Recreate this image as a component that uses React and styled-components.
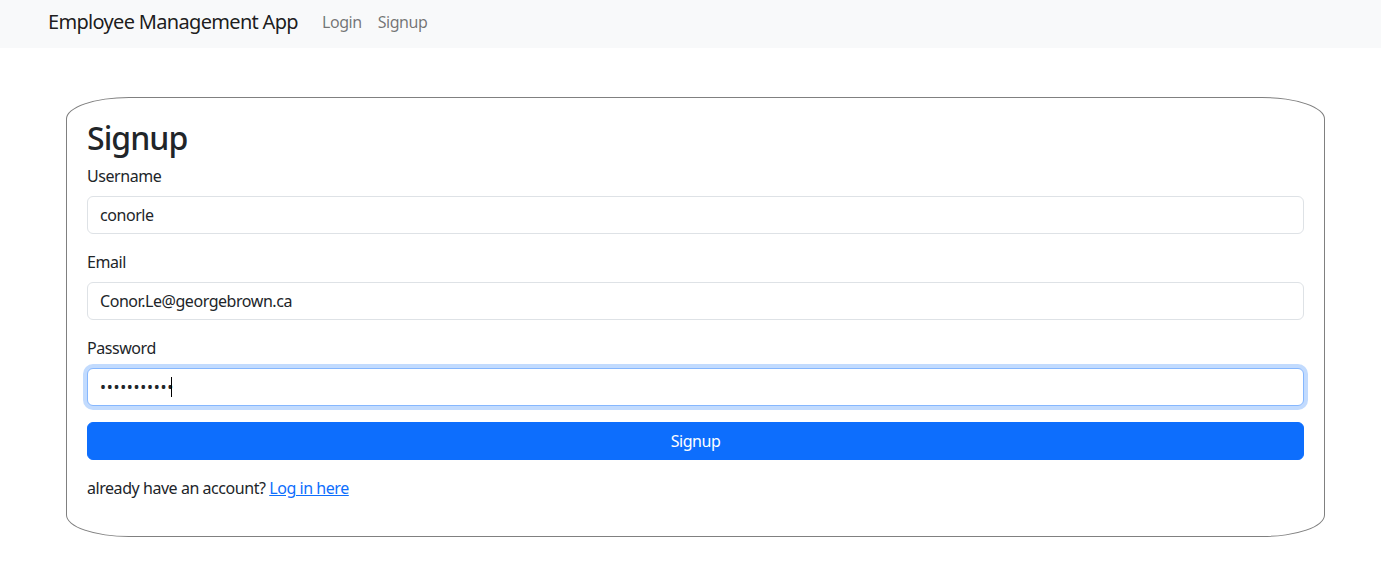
import React, { useState } from "react";
import styled, { createGlobalStyle } from "styled-components";

const FONT = `"Segoe UI", "Noto Sans", "Liberation Sans", sans-serif`;

const Global = createGlobalStyle`
  *, *::before, *::after { box-sizing: border-box; }
  body {
    margin: 0;
    font-family: ${FONT};
    font-size: 16px;
    line-height: 1.5;
    letter-spacing: -0.028em;
    color: #212529;
    background: #fff;
  }
`;

const Navbar = styled.nav`
  height: 48px;
  background: #f8f9fa;
  display: flex;
  align-items: center;
  padding: 0 0 4px 48px;
`;

const Brand = styled.a`
  font-size: 20px;
  line-height: 30px;
  letter-spacing: -0.034em;
  color: rgba(0, 0, 0, 0.9);
  text-decoration: none;
  margin-right: 16px;
`;

const NavLinks = styled.div`
  display: flex;
  align-items: center;
`;

const NavLink = styled.a`
  font-size: 16px;
  line-height: 24px;
  padding: 0 8px;
  color: rgba(0, 0, 0, 0.55);
  text-decoration: none;
`;

const Card = styled.div`
  margin: 49px 56px 0 66px;
  border: 1px solid #808080;
  border-radius: 5%;
  padding: 20px 20px 20px;
`;

const Title = styled.h2`
  margin: 0 0 8px;
  padding-top: 2px;
  font-size: 32px;
  font-weight: 500;
  line-height: 36px;
  letter-spacing: -0.03em;
`;

const Field = styled.div`
  margin-bottom: 16px;
`;

const Label = styled.label`
  display: block;
  margin-bottom: 8px;
  line-height: 24px;
`;

const InputWrap = styled.div`
  position: relative;
`;

const Input = styled.input`
  display: block;
  width: 100%;
  height: 38px;
  padding: 6px 12px;
  font-family: ${FONT};
  font-size: 16px;
  line-height: 1.5;
  letter-spacing: ${(p) => (p.type === "password" ? "0.7px" : "-0.028em")};
  color: #212529;
  background: #fff;
  border: 1px solid ${(p) => (p.$focused ? "#86b7fe" : "#dee2e6")};
  border-radius: 6px;
  outline: 0;
  box-shadow: ${(p) =>
    p.$focused ? "0 0 0 4px rgba(13, 110, 253, 0.25)" : "none"};
  caret-color: transparent;
`;

const Caret = styled.span`
  position: absolute;
  left: 84px;
  top: 9px;
  width: 1px;
  height: 20px;
  background: #000;
  pointer-events: none;
`;

const Button = styled.button`
  display: block;
  width: 100%;
  height: 38px;
  margin-bottom: 16px;
  border: 1px solid #0d6efd;
  border-radius: 6px;
  background: #0d6efd;
  color: #fff;
  font-family: ${FONT};
  font-size: 16px;
  line-height: 1.5;
  letter-spacing: -0.028em;
  cursor: pointer;
`;

const Footer = styled.p`
  margin: 0 0 16px;
`;

const Link = styled.a`
  color: #0d6efd;
  text-decoration: underline;
`;

export default function App() {
  const [username, setUsername] = useState("conorle");
  const [email, setEmail] = useState("Conor.Le@georgebrown.ca");
  const [password, setPassword] = useState("12345678901");

  return (
    <>
      <Global />
      <Navbar>
        <Brand href="#">Employee Management App</Brand>
        <NavLinks>
          <NavLink href="#">Login</NavLink>
          <NavLink href="#">Signup</NavLink>
        </NavLinks>
      </Navbar>
      <Card>
        <Title>Signup</Title>
        <Field>
          <Label htmlFor="username">Username</Label>
          <Input
            id="username"
            value={username}
            onChange={(e) => setUsername(e.target.value)}
          />
        </Field>
        <Field>
          <Label htmlFor="email">Email</Label>
          <Input
            id="email"
            type="email"
            value={email}
            onChange={(e) => setEmail(e.target.value)}
          />
        </Field>
        <Field>
          <Label htmlFor="password">Password</Label>
          <InputWrap>
            <Input
              id="password"
              type="password"
              $focused
              value={password}
              onChange={(e) => setPassword(e.target.value)}
            />
            <Caret />
          </InputWrap>
        </Field>
        <Button type="submit">Signup</Button>
        <Footer>
          already have an account? <Link href="#">Log in here</Link>
        </Footer>
      </Card>
    </>
  );
}
